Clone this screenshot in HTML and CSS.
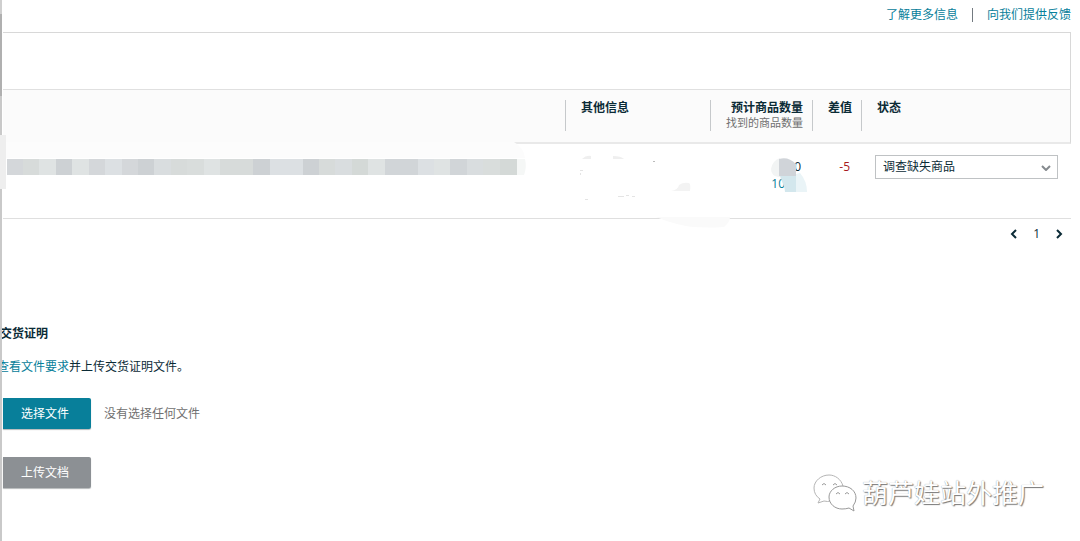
FILE: index.html
```html
<!DOCTYPE html>
<html lang="zh-CN">
<head>
<meta charset="utf-8">
<title>交货证明</title>
<link rel="stylesheet" href="styles.css">
</head>
<body>
<div class="page">
  <nav class="top-links">
    <a href="#info">了解更多信息</a>
    <a class="feedback" href="#feedback">向我们提供反馈</a>
  </nav>
  <main>
    <div class="toolbar"></div>
    <table class="items">
      <colgroup><col><col class="col-info"><col class="col-qty"><col class="col-diff"><col class="col-status"></colgroup>
      <thead>
        <tr>
          <th></th>
          <th><div class="head">其他信息</div></th>
          <th><div class="head number"><div>预计商品数量</div><div class="sub">找到的商品数量</div></div></th>
          <th><div class="head number">差值</div></th>
          <th><div class="head">状态</div></th>
        </tr>
      </thead>
      <tbody>
        <tr>
          <td></td>
          <td></td>
          <td class="qty">10<a href="#found">10</a></td>
          <td class="diff">-5</td>
          <td class="status">
            <div class="select-wrap">
              <select aria-label="状态"><option>调查缺失商品</option></select>
              <svg width="10" height="6" viewBox="0 0 10 6"><path d="M1 1l4 4 4-4" fill="none" stroke="#858a8e" stroke-width="2"/></svg>
            </div>
          </td>
        </tr>
      </tbody>
    </table>
    <nav class="pager" aria-label="分页">
      <button type="button" aria-label="上一页"><svg width="8" height="10" viewBox="0 0 8 10"><path d="M6 1L2 5l4 4" fill="none" stroke="#0b2b36" stroke-width="2"/></svg></button>
      <span>1</span>
      <button type="button" aria-label="下一页"><svg width="8" height="10" viewBox="0 0 8 10"><path d="M2 1l4 4-4 4" fill="none" stroke="#0b2b36" stroke-width="2"/></svg></button>
    </nav>
    <section class="proof">
      <h2>交货证明</h2>
      <p><a href="#requirements">查看文件要求</a>并上传交货证明文件。</p>
      <div class="file-row"><button type="button" class="choose">选择文件</button><span>没有选择任何文件</span></div>
      <button type="button" class="upload">上传文档</button>
    </section>
  </main>
</div>
<div class="rail"></div>
<svg class="smudge" width="530" height="96" viewBox="0 0 530 96">
  <path d="M3 12H514q10 6 11 16H3z" fill="#fcfcfc"/>
  <path d="M0 5h6v54H0z" fill="#eeeeee"/>
  <g shape-rendering="crispEdges">
    <path d="M7 29h510v16H7z" fill="#d9dddf"/>
    <path d="M7 29h16v16H7zM89 29h16v16H89zM122 29h16v16h-16z" fill="#d4d7da"/>
    <path d="M23 29h16v16H23zM171 29h16v16h-16zM220 29h33v16h-33zM319 29h16v16h-16z" fill="#d7dbda"/>
    <path d="M39 29h17v16H39zM72 29h17v16H72zM204 29h16v16h-16zM368 29h17v16h-17zM434 29h16v16h-16z" fill="#dfe3e3"/>
    <path d="M56 29h16v16H56zM138 29h16v16h-16zM253 29h17v16h-17zM303 29h16v16h-16z" fill="#cdd1d4"/>
    <path d="M385 29h33v16h-33zM450 29h17v16h-17z" fill="#d1d5d8"/>
    <path d="M105 29h17v16h-17zM270 29h33v16h-33zM418 29h16v16h-16z" fill="#dce0e3"/>
    <path d="M187 29h17v16h-17zM483 29h17v16h-17z" fill="#d9dddc"/>
    <path d="M352 29h16v16h-16zM500 29h17v16h-17z" fill="#d4d9d7"/>
  </g>
  <path d="M517 29h8q2 8-1 16h-7z" fill="#f5f7f6"/>
</svg>
<svg class="smudge smudge-info" width="170" height="80" viewBox="0 0 170 80">
  <path d="M2 9q4-4 9-3v3zM33 6q8 0 11 3H33z" fill="#efefef"/>
  <path d="M91 41q7-1 8-6 4-3 10-2 2 1 1 8z" fill="#f3f3f3"/>
  <path d="M0 20h3v1H0zM0 23h1v2H0zM38 46h6v1h-6zM46 45h3v1h-3zM52 46h3v1h-3zM5 49h3v1H5z" fill="#e4e4e4"/>
  <path d="M73 11h2v1h-2z" fill="#bbb"/>
  <path d="M76 67h74q0 5-6 10-30 2-47-3-12-3-21-7z" fill="#fafafa"/>
</svg>
<svg class="smudge smudge-qty" width="42" height="40" viewBox="0 0 42 40">
  <path d="M9 19Q1 18 1 11 2 3 10 0v19z" fill="#f2f4f4"/>
  <path d="M9 1q9-3 17 5v12H9z" fill="#d0d4d9"/>
  <path d="M10 18h16v16H15q0-4-2-8z" fill="#d3e7ed"/>
  <path d="M26 16l4-1q7 8 7 19H26z" fill="#eaf4f7"/>
</svg>
<div class="watermark">
  <svg width="44" height="40" viewBox="0 0 44 40">
    <g fill="#fff" stroke="#999" stroke-width="1">
      <path d="M30 13C28 6 22 2 16 2 8 2 1 8 1 15q0 7 6 11l-2 4 6-2q4 1 6 0" stroke="#b5b5b5"/>
      <path d="M29 13c-7 0-13 5-13 11 0 7 6 12 13 12q4 0 7-1l5 3-1-5q3-4 3-8c0-7-6-12-14-12z"/>
      <path d="M9 12q2-3 4 0M20 12q2-3 4 0M23 21q2-3 4 0M32 21q2-3 4 0" fill="none"/>
    </g>
  </svg>
  <span>葫芦娃站外推广</span>
</div>
</body>
</html>
```
FILE: styles.css
```css
* { box-sizing: border-box; }
body {
  margin: 0;
  position: relative;
  min-height: 100vh;
  overflow: hidden;
  background: #fff;
  color: #0b2b36;
  font: 12px/14px "Open Sans", "Noto Sans CJK SC", sans-serif;
}
a { color: #08809a; text-decoration: none; }
button, select { font: inherit; color: inherit; }
.page { padding: 0 9px 0 3px; }
.top-links {
  display: flex;
  justify-content: flex-end;
  align-items: center;
  height: 32px;
  padding-bottom: 3px;
}
.feedback { margin-left: 14px; padding-left: 14px; border-left: 1px solid #737a80; }
.toolbar { height: 57px; border-top: 1px solid #d8d8d8; border-right: 1px solid #d8d8d8; }
.items { width: 100%; table-layout: fixed; border-collapse: separate; border-spacing: 0; }
.col-info { width: 145px; }
.col-qty { width: 102px; }
.col-diff { width: 49px; }
.col-status { width: 210px; }
th {
  height: 55px;
  padding: 10px 0 0;
  vertical-align: top;
  text-align: left;
  background: #fbfbfb;
  border-top: 1px solid #e0e0e0;
  border-bottom: 2px solid #e9e9e9;
}
th:last-child { border-right: 1px solid #d8d8d8; }
.head { height: 31px; padding-left: 15px; border-left: 1px solid #c6c9cb; line-height: 16px; }
.head.number { padding: 0 9px 0 0; text-align: right; }
.sub { color: #707070; font-weight: 400; font-size: 11px; line-height: 13px; }
td { height: 75px; padding: 11px 0 0; vertical-align: top; border-bottom: 1px solid #dfdfdf; }
.qty { padding: 14px 11px 0 0; text-align: right; line-height: 17px; }
.qty a { display: block; padding-right: 16px; }
.diff { padding: 14px 11px 0 0; text-align: right; line-height: 17px; color: #a8191e; }
.select-wrap { position: relative; margin: 0 13px 0 14px; }
select {
  display: block;
  appearance: none;
  width: 100%;
  height: 24px;
  padding: 0 24px 0 7px;
  border: 1px solid #bfc2c4;
  border-radius: 0;
  background: #fff;
}
.select-wrap svg { position: absolute; right: 7px; top: 10px; }
.pager { display: flex; justify-content: flex-end; align-items: center; gap: 15px; height: 29px; padding-right: 8px; }
.pager button { display: flex; padding: 0; border: 0; background: none; }
.proof { padding-top: 79px; }
h2 { margin: 0 0 19px -3px; font-size: 12px; line-height: 14px; }
p { margin: 0 0 24px -6px; }
.file-row { display: flex; align-items: center; gap: 13px; margin-bottom: 28px; color: #707070; }
.choose, .upload {
  height: 31px;
  padding: 0 22px 0 18px;
  border: 0;
  border-radius: 0 2px 2px 0;
  color: #fff;
  background: #087f9a;
  box-shadow: 0 1px 1px #b5b8ba;
}
.upload { background: #8c9094; }
.rail { position: absolute; left: 0; top: 0; bottom: 0; width: 2px; background: linear-gradient(#cfcfcf 14px, #b0b0b0 14px 96px, #c9c9c9 96px); }
.smudge { position: absolute; left: 0; top: 130px; pointer-events: none; }
.smudge-info { left: 580px; top: 150px; }
.smudge-qty { left: 770px; top: 158px; }
.watermark {
  position: absolute;
  right: 36px;
  bottom: 28px;
  display: flex;
  align-items: center;
  gap: 5px;
  color: #fff;
  font-size: 26px;
  line-height: 40px;
  text-shadow: 1px 1px 1px #777, 0 0 1px #999;
}
```
